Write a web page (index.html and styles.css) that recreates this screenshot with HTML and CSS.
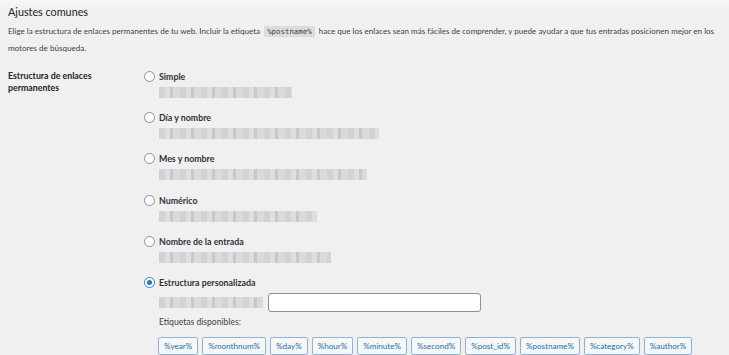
FILE: index.html
```html
<!DOCTYPE html>
<html lang="es">
<head>
    <meta charset="UTF-8">
    <meta name="viewport" content="width=device-width, initial-scale=1.0">
    <title>Ajustes de enlaces permanentes</title>
    <link rel="stylesheet" href="styles.css">
</head>
<body>
    <div class="wrap">
        <h2 class="title">Ajustes comunes</h2>
        <p class="intro">Elige la estructura de enlaces permanentes de tu web. Incluir la etiqueta <code>%postname%</code> hace que los enlaces sean más fáciles de comprender, y puede ayudar a que tus entradas posicionen mejor en los motores de búsqueda.</p>

        <div class="form-row">
            <div class="row-label">Estructura de enlaces permanentes</div>
            <div class="row-field">
                <div class="option">
                    <label><input type="radio" name="structure"> Simple</label>
                    <div class="blur w-130"></div>
                </div>
                <div class="option">
                    <label><input type="radio" name="structure"> Día y nombre</label>
                    <div class="blur w-220"></div>
                </div>
                <div class="option">
                    <label><input type="radio" name="structure"> Mes y nombre</label>
                    <div class="blur w-208"></div>
                </div>
                <div class="option">
                    <label><input type="radio" name="structure"> Numérico</label>
                    <div class="blur w-158"></div>
                </div>
                <div class="option">
                    <label><input type="radio" name="structure"> Nombre de la entrada</label>
                    <div class="blur w-172"></div>
                </div>
                <div class="option">
                    <label><input type="radio" name="structure" checked> Estructura personalizada</label>
                    <div class="custom-line">
                        <div class="blur w-104"></div>
                        <input type="text" class="custom-input">
                    </div>
                    <div class="tags-title">Etiquetas disponibles:</div>
                    <div class="tags">
                        <button>%year%</button>
                        <button>%monthnum%</button>
                        <button>%day%</button>
                        <button>%hour%</button>
                        <button>%minute%</button>
                        <button>%second%</button>
                        <button>%post_id%</button>
                        <button>%postname%</button>
                        <button>%category%</button>
                        <button>%author%</button>
                    </div>
                </div>
            </div>
        </div>
    </div>
</body>
</html>
```

FILE: styles.css
```css
body {
    margin: 0;
    padding: 0;
    background-color: #f0f0f1;
    font-family: Lato, "Noto Sans", sans-serif;
    color: #3c434a;
    font-size: 10px;
}
.wrap {
    padding: 3px 8px 0 8px;
    background: linear-gradient(#f7f7f7, #f0f0f1 10px);
}
.title {
    margin: 0 0 2px 0;
    font-size: 10.8px;
    line-height: 18px;
    font-weight: normal;
    color: #1d2327;
}
.intro {
    margin: 0;
    font-size: 8.05px;
    line-height: 17px;
    color: #3c434a;
}
.intro code {
    font-family: "DejaVu Sans Mono", monospace;
    font-size: 7.4px;
    background: #dcdcde;
    padding: 1px 3px;
    margin: 0 2px;
}
.form-row {
    display: flex;
    margin-top: 12px;
}
.row-label {
    flex-shrink: 0;
    width: 128px;
    margin-right: 8px;
    padding-top: 1px;
    font-weight: 700;
    font-size: 8.8px;
    line-height: 12px;
    color: #1d2327;
}
.row-field {
    display: flex;
    flex-direction: column;
    gap: 12.2px;
}
.option label {
    display: flex;
    align-items: center;
    gap: 4px;
    font-weight: 700;
    font-size: 8.8px;
    color: #2c3338;
    height: 15px;
}
.option input[type="radio"] {
    appearance: none;
    width: 11px;
    height: 11px;
    margin: 0;
    border: 1px solid #8c8f94;
    border-radius: 50%;
    background: #fff;
    display: grid;
    place-content: center;
}
.option input[type="radio"]:checked {
    border-color: #3582c4;
}
.option input[type="radio"]:checked::before {
    content: "";
    width: 5px;
    height: 5px;
    border-radius: 50%;
    background: #2f75b5;
}
.blur {
    height: 11px;
    margin: 3px 0 0 15px;
    background:
        repeating-linear-gradient(90deg, rgba(120, 120, 125, 0.08) 0 6px, rgba(255, 255, 255, 0.12) 6px 11px, rgba(90, 90, 95, 0.14) 11px 14px, transparent 14px 21px),
        #dadadc;
    filter: blur(0.6px);
}
.w-130 { width: 133px; }
.w-220 { width: 220px; }
.w-208 { width: 208px; }
.w-158 { width: 158px; }
.w-172 { width: 172px; }
.w-104 { width: 104px; margin-top: 0; }
.custom-line {
    display: flex;
    align-items: center;
    gap: 5px;
    margin-top: 3px;
}
.custom-input {
    width: 213px;
    height: 19px;
    margin: 0;
    padding: 0;
    box-sizing: border-box;
    border: 1px solid #8c8f94;
    border-radius: 3px;
    background: #fff;
}
.tags-title {
    margin: 4px 0 0 15px;
    font-size: 8.6px;
    line-height: 12px;
    color: #3c434a;
}
.tags {
    display: flex;
    gap: 4px;
    margin: 9px 0 0 14px;
}
.tags button {
    height: 18px;
    margin: 0;
    padding: 0 5px;
    border: 1px solid #8fb3d8;
    border-radius: 2px;
    background: #f6f7f7;
    color: #2271b1;
    font-family: Lato, "Noto Sans", sans-serif;
    font-size: 8.1px;
}
```
